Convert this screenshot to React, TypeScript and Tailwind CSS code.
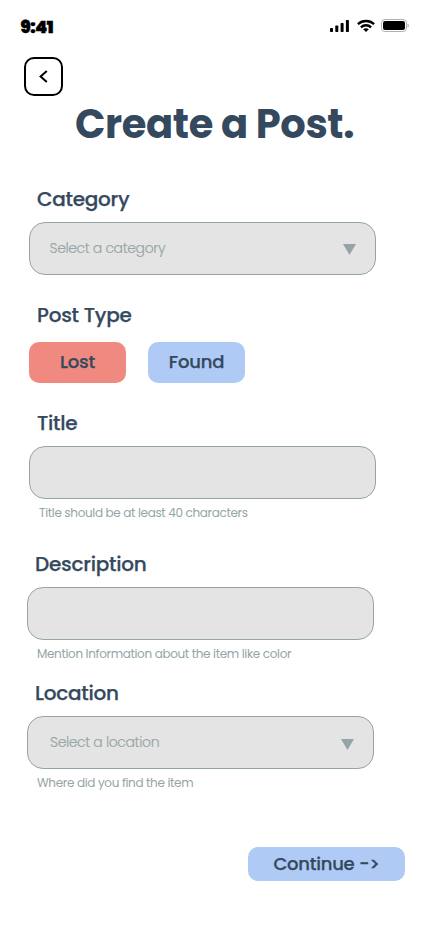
import type { ReactNode } from "react";

function StatusBar() {
  return (
    <header className="flex h-[57px] items-start justify-between pr-[21px] pl-[20.5px]">
      <span className="mt-[17px] text-[17px] leading-[20px] font-black tracking-[-0.4px] text-black [-webkit-text-stroke:0.4px_#000]">9:41</span>
      <div className="mt-[19px] flex items-start">
        <svg width="20" height="13" viewBox="0 0 20 13" className="block">
          <rect x="0" y="9" width="3" height="4" rx="0.7" />
          <rect x="5.3" y="6.6" width="3" height="6.4" rx="0.7" />
          <rect x="10.6" y="4" width="3" height="9" rx="0.7" />
          <rect x="15.9" y="1" width="3" height="12" rx="0.7" />
        </svg>
        <svg width="18" height="13" viewBox="0 0 18 13" className="ml-[7px] block" fill="none" stroke="#000" strokeWidth="2.4">
          <path d="M0.9 5.1C5.4 0.9 12.6 0.9 17.1 5.1" />
          <path d="M3.9 8.3C6.8 5.6 11.2 5.6 14.1 8.3" />
          <path d="M6.2 10.3C7.9 8.9 10.1 8.9 11.8 10.3L9 13Z" fill="#000" stroke="none" />
        </svg>
        <svg width="28" height="13" viewBox="0 0 28 13" className="ml-[6px] block">
          <rect x="0.5" y="0.5" width="25" height="12" rx="3.6" fill="none" stroke="#b0b0b0" />
          <rect x="2" y="2" width="22" height="9" rx="2.2" />
          <path d="M26.6 4.4C28.2 5.2 28.2 7.8 26.6 8.6Z" fill="#aaa" />
        </svg>
      </div>
    </header>
  );
}

function Label({ children }: { children: ReactNode }) {
  return (
    <h2 className="ml-[8px] h-6 text-[20px] leading-6 font-medium tracking-[-0.25px] whitespace-nowrap text-[#34495e] [-webkit-text-stroke:0.25px_#34495e]">
      {children}
    </h2>
  );
}

function Field({ children }: { children?: ReactNode }) {
  return (
    <div className="mt-[11px] flex h-[53px] w-[347px] items-center justify-between rounded-[16px] border border-[#95a5a6] bg-[#e4e4e4] pr-[19px]">
      {children}
    </div>
  );
}

function Triangle({ className }: { className: string }) {
  return (
    <svg width="13" height="11" viewBox="0 0 13 11" className={`block ${className}`} fill="#95a5a6">
      <path d="M0 0H13L6.5 11Z" />
    </svg>
  );
}

function Hint({ children }: { children: ReactNode }) {
  return (
    <p className="mt-[5px] ml-[10px] h-[18px] text-[12px] leading-[18px] tracking-[-0.34px] whitespace-nowrap text-[#95a5a6]">
      {children}
    </p>
  );
}

export default function App() {
  return (
    <main className="h-[932px] w-[430px] overflow-hidden bg-white font-['Poppins','Inter',sans-serif]">
      <StatusBar />
      <button className="ml-[24px] flex h-[39px] w-[39px] items-center justify-center rounded-[10px] border-2 border-black">
        <svg width="9" height="13" viewBox="0 0 9 13" fill="none" stroke="#000" strokeWidth="2">
          <path d="M7.8 1L1.6 6.5L7.8 12" />
        </svg>
      </button>
      <h1 className="mt-[4px] ml-[75px] h-12 text-[40px] leading-12 font-bold tracking-[-0.4px] whitespace-nowrap text-[#34495e]">
        Create a Post.
      </h1>

      <section className="mt-[39px] ml-[29px]">
        <Label>Category</Label>
        <Field>
          <span className="mb-[2px] ml-[19.5px] text-[14px] leading-5 font-light tracking-[-0.38px] text-[#95a5a6] [-webkit-text-stroke:0.15px_#95a5a6]">Select a category</span>
          <Triangle className="mt-[2px]" />
        </Field>
      </section>

      <section className="mt-[28px] ml-[29px]">
        <Label>Post Type</Label>
        <div className="mt-[15px] flex gap-[22px] text-[18px] leading-6 font-medium tracking-[-0.2px] text-[#34495e] [-webkit-text-stroke:0.25px_#34495e]">
          <button className="h-[41px] w-[97px] rounded-[10px] bg-[#f08a80] pb-[2px]">Lost</button>
          <button className="h-[41px] w-[97px] rounded-[10px] bg-[#b0caf6] pb-[2px]">Found</button>
        </div>
      </section>

      <section className="mt-[28px] ml-[29px]">
        <Label>Title</Label>
        <Field />
        <Hint>Title should be at least 40 characters</Hint>
      </section>

      <section className="mt-[30px] ml-[27px]">
        <Label>Description</Label>
        <Field />
        <Hint>Mention Information about the item like color</Hint>
      </section>

      <section className="mt-[18px] ml-[27px]">
        <Label>Location</Label>
        <Field>
          <span className="mb-[2px] ml-[22px] text-[14px] leading-5 font-light tracking-[-0.38px] text-[#95a5a6] [-webkit-text-stroke:0.15px_#95a5a6]">Select a location</span>
          <Triangle className="mt-[4px]" />
        </Field>
        <Hint>Where did you find the item</Hint>
      </section>

      <button className="mt-[55px] ml-[248px] block h-[34px] w-[157px] rounded-[10px] bg-[#b0caf6] text-[18px] leading-6 font-medium tracking-[-0.25px] text-[#34495e] [-webkit-text-stroke:0.25px_#34495e]">
        Continue -&gt;
      </button>
    </main>
  );
}
